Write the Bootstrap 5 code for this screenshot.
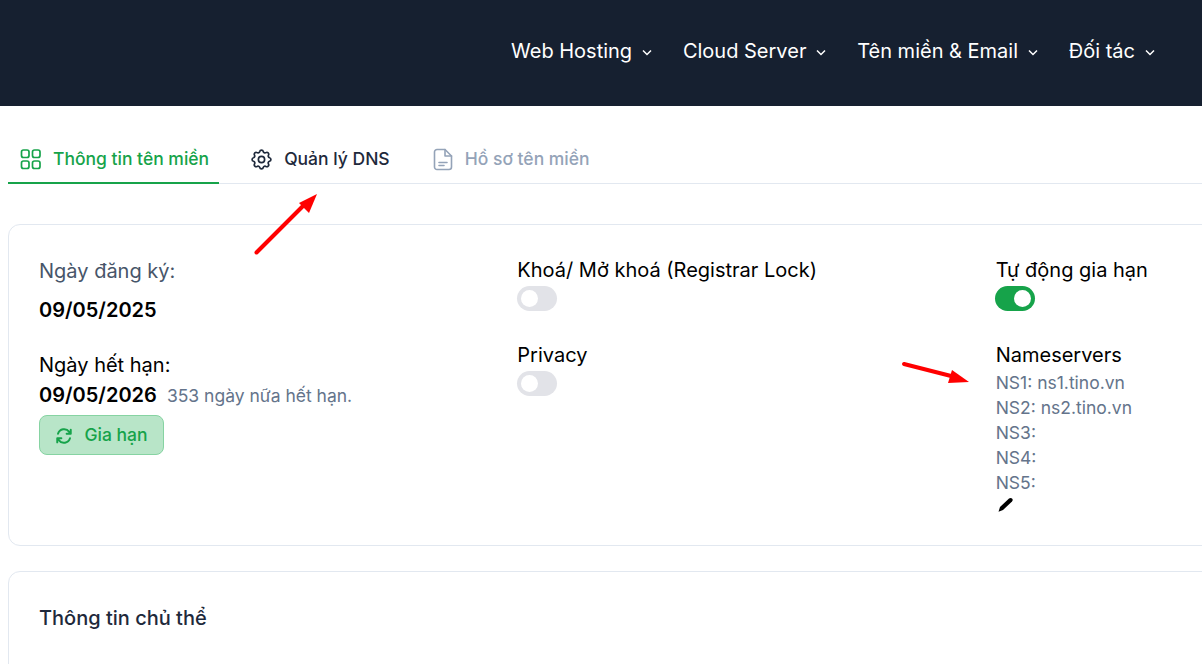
<!DOCTYPE html>
<html lang="en">
<head>
<meta charset="UTF-8">
<meta name="viewport" content="width=device-width, initial-scale=1.0">
<title>Thông tin tên miền</title>
<link href="https://cdn.jsdelivr.net/npm/bootstrap@5.3.3/dist/css/bootstrap.min.css" rel="stylesheet">
<style>
html, body { height: 100%; overflow: hidden; }
body { font-family: Inter, "Noto Sans", sans-serif; color: #000; background: #fff; position: relative; }
.top-bar { height: 106px; background: #162030; padding-right: 46px; align-items: flex-start; }
.top-link { font-size: 20px; line-height: 24px; color: #fff; margin-top: 39px; margin-left: 29.75px; }
.top-link svg { margin-left: 9px; margin-top: -1px; }
.page-clip { height: 558px; overflow: hidden; }
.page-wrap { padding-left: 8px; width: 1505px; }
.tab-row { margin-top: 26px; border-bottom: 1px solid #e2e8f0; height: 52px; }
.tab-item { font-size: 17.5px; font-weight: 500; color: #1e293b; height: 52px; padding: 2px 0 0; }
.tab-item.on { color: #16a34a; border-bottom: 2px solid #16a34a; padding: 4px 10px 0 12px; gap: 11px; margin-right: 30px; }
.tab-item.dns { gap: 10px; margin-right: 43px; }
.tab-item.off { color: #94a3b8; gap: 12px; }
.info-box { border: 1px solid #e2e8f0; border-radius: 12px; margin-top: 40px; height: 322px; padding: 30px; }
.info-box.second { margin-top: 25px; height: 200px; padding-top: 31px; font-size: 20px; font-weight: 500; color: #1e293b; }
.date-col { padding-top: 1px; }
.lbl { font-size: 20px; line-height: 30px; }
.lbl.dim { color: #475569; }
.lbl.gap-a { margin-top: 25px; }
.lbl.gap-b { margin-top: 29px; }
.big-date { font-size: 20px; font-weight: 600; line-height: 30px; }
.big-date.first { margin-top: 9px; }
.days { font-size: 17.5px; color: #64748b; margin-left: 5px; font-weight: 400; }
.renew-btn { background: #b8e5c8; border: 1px solid #86d3a2; color: #16a34a; font-size: 17.5px; font-weight: 500; border-radius: 8px; height: 40px; width: 125px; gap: 11px; padding: 1px 0 0; margin-top: 4px; }
.sw { width: 40px; height: 25px; border-radius: 13px; background: #e2e3e8; position: relative; display: block; margin-top: 1px; }
.sw::after { content: ""; position: absolute; left: 4px; top: 4px; width: 17px; height: 17px; border-radius: 50%; background: #fff; }
.sw.on { background: #16a34a; margin-left: -1px; }
.sw.on::after { left: 19px; }
.ns-line { font-size: 17.5px; line-height: 25px; color: #64748b; }
.pencil { margin-top: 1px; }
.arrows { position: absolute; left: 0; top: 0; pointer-events: none; }
</style>
</head>
<body>
<div class="top-bar d-flex justify-content-end">
  <a class="top-link text-decoration-none" href="#">Web Hosting<svg width="12" height="12" viewBox="0 0 12 12" fill="none" stroke="#fff" stroke-width="1.5"><path d="M2 4.500l4 4 4-4"/></svg></a>
  <a class="top-link text-decoration-none" href="#">Cloud Server<svg width="12" height="12" viewBox="0 0 12 12" fill="none" stroke="#fff" stroke-width="1.5"><path d="M2 4.500l4 4 4-4"/></svg></a>
  <a class="top-link text-decoration-none" href="#">Tên miền &amp; Email<svg width="12" height="12" viewBox="0 0 12 12" fill="none" stroke="#fff" stroke-width="1.5"><path d="M2 4.500l4 4 4-4"/></svg></a>
  <a class="top-link text-decoration-none" href="#">Đối tác<svg width="12" height="12" viewBox="0 0 12 12" fill="none" stroke="#fff" stroke-width="1.5"><path d="M2 4.500l4 4 4-4"/></svg></a>
</div>
<div class="page-clip">
<div class="page-wrap">
  <div class="tab-row d-flex">
    <div class="tab-item on d-flex align-items-center">
      <svg width="22" height="22" viewBox="0 0 22 22" fill="none" stroke="#16a34a" stroke-width="1.7"><rect x="1.500" y="2" width="7.500" height="7.500" rx="2"/><rect x="12.500" y="2" width="7.500" height="7.500" rx="2"/><rect x="1.500" y="13" width="7.500" height="7.500" rx="2"/><rect x="12.500" y="13" width="7.500" height="7.500" rx="2"/></svg>
      Thông tin tên miền
    </div>
    <div class="tab-item dns d-flex align-items-center">
      <svg width="25" height="25" viewBox="0 0 24 24" fill="none" stroke="#1e293b" stroke-width="1.600" stroke-linecap="round" stroke-linejoin="round"><path d="M10.300 4.300c.4-1.800 3-1.800 3.400 0a1.700 1.700 0 0 0 2.600 1.100c1.500-.9 3.300.8 2.400 2.400a1.700 1.700 0 0 0 1 2.500c1.800.5 1.800 3 0 3.400a1.700 1.700 0 0 0-1 2.600c.9 1.500-.9 3.300-2.400 2.400a1.700 1.700 0 0 0-2.600 1c-.4 1.800-3 1.800-3.400 0a1.700 1.700 0 0 0-2.600-1c-1.500.9-3.300-.9-2.400-2.400a1.700 1.700 0 0 0-1-2.600c-1.800-.4-1.800-3 0-3.400a1.700 1.700 0 0 0 1-2.500c-.9-1.600.9-3.300 2.400-2.400 1 .6 2.300.1 2.600-1.100z"/><circle cx="12" cy="12" r="3"/></svg>
      Quản lý DNS
    </div>
    <div class="tab-item off d-flex align-items-center">
      <svg width="20" height="23" viewBox="0 0 20 23" fill="none" stroke="#94a3b8" stroke-width="1.600" stroke-linecap="round" stroke-linejoin="round"><path d="M12 1.500H4a2.500 2.500 0 0 0-2.500 2.500v15A2.500 2.500 0 0 0 4 21.500h12a2.500 2.500 0 0 0 2.500-2.500V8z"/><path d="M12 1.500V8h6.500M6 14.500h8M6 17.500h5"/></svg>
      Hồ sơ tên miền
    </div>
  </div>
  <div class="info-box">
    <div class="row g-0">
      <div class="col-4 date-col">
        <div class="lbl dim">Ngày đăng ký:</div>
        <div class="big-date first">09/05/2025</div>
        <div class="lbl gap-a">Ngày hết hạn:</div>
        <div class="big-date">09/05/2026 <span class="days">353 ngày nữa hết hạn.</span></div>
        <button class="btn renew-btn d-flex align-items-center justify-content-center">
          <svg width="18" height="18" viewBox="0 0 24 24" fill="none" stroke="#16a34a" stroke-width="2.600" stroke-linecap="round" stroke-linejoin="round"><path d="M4 9a8.500 8.500 0 0 1 15-2.500L21 9M21 3.500V9h-5.500"/><path d="M20 15a8.500 8.500 0 0 1-15 2.500L3 15M3 20.500V15h5.500"/></svg>
          Gia hạn
        </button>
      </div>
      <div class="col-4">
        <div class="lbl">Khoá/ Mở khoá (Registrar Lock)</div>
        <span class="sw"></span>
        <div class="lbl gap-b">Privacy</div>
        <span class="sw"></span>
      </div>
      <div class="col-4">
        <div class="lbl">Tự động gia hạn</div>
        <span class="sw on"></span>
        <div class="lbl gap-b">Nameservers</div>
        <div class="ns-line">NS1: ns1.tino.vn</div>
        <div class="ns-line">NS2: ns2.tino.vn</div>
        <div class="ns-line">NS3:</div>
        <div class="ns-line">NS4:</div>
        <div class="ns-line">NS5:</div>
        <svg class="d-block pencil" width="18" height="17" viewBox="0 0 18 17"><path d="M2.500 15.800L4 11 13 2.500Q15 1.500 16.500 3 17 4.500 16 5.500L7 14z" fill="#000"/></svg>
      </div>
    </div>
  </div>
  <div class="info-box second">Thông tin chủ thể</div>
</div>
</div>
<svg class="arrows" width="1202" height="664" viewBox="0 0 1202 664">
  <path d="M256.500 252.500L303 206" stroke="#f00" stroke-width="4" stroke-linecap="round"/>
  <path d="M317 194L299 203L309 213z" fill="#f00"/>
  <path d="M904 364L955 377" stroke="#f00" stroke-width="4" stroke-linecap="round"/>
  <path d="M969 382L952 370L948 383z" fill="#f00"/>
</svg>
</body>
</html>
